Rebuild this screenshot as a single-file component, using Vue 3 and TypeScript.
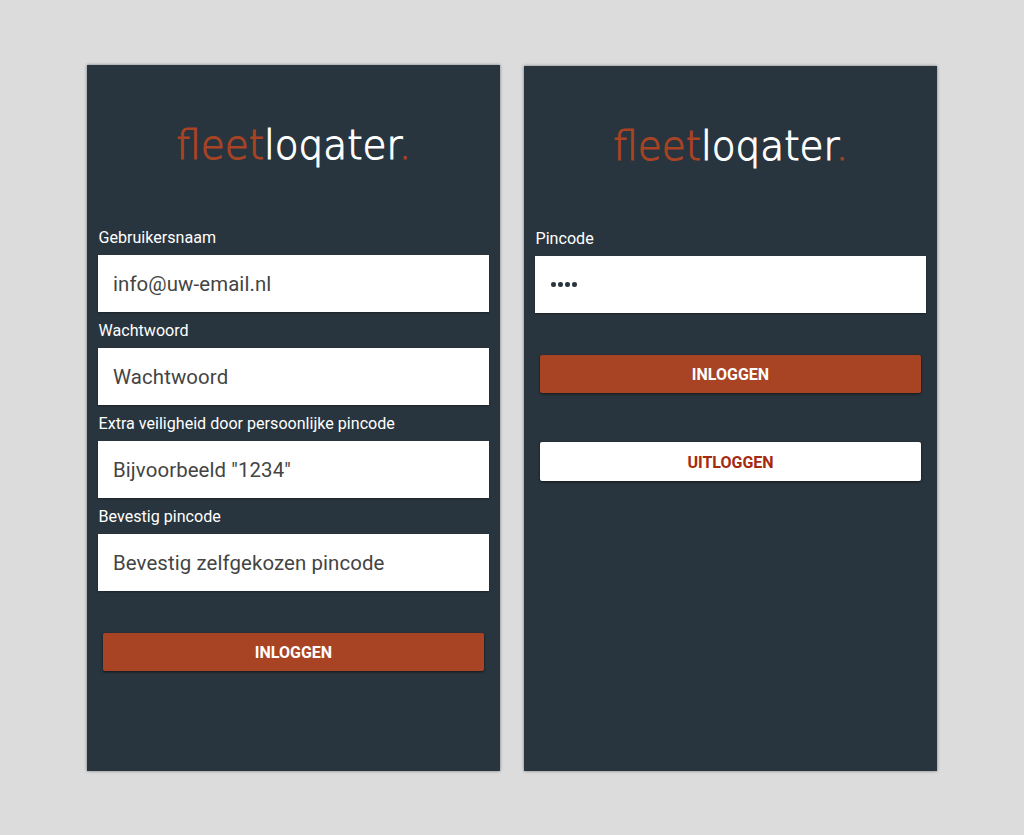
<script setup lang="ts">
const fields = [
  { label: 'Gebruikersnaam', value: 'info@uw-email.nl' },
  { label: 'Wachtwoord', value: 'Wachtwoord' },
  { label: 'Extra veiligheid door persoonlijke pincode', value: 'Bijvoorbeeld "1234"' },
  { label: 'Bevestig pincode', value: 'Bevestig zelfgekozen pincode' },
]
</script>

<template>
  <div class="page">
    <section class="panel">
      <div class="logo"><div class="mark"><span class="red">fleet</span><span class="white">loqater</span><span class="red">.</span></div></div>
      <div class="fields">
        <div v-for="f in fields" :key="f.label" class="field">
          <div class="label">{{ f.label }}</div>
          <div class="input">{{ f.value }}</div>
        </div>
      </div>
      <div class="btn primary">INLOGGEN</div>
    </section>
    <section class="panel second">
      <div class="logo"><div class="mark"><span class="red">fleet</span><span class="white">loqater</span><span class="red">.</span></div></div>
      <div class="fields">
        <div class="field">
          <div class="label">Pincode</div>
          <div class="input dots"><i></i><i></i><i></i><i></i></div>
        </div>
      </div>
      <div class="btn primary">INLOGGEN</div>
      <div class="btn light">UITLOGGEN</div>
    </section>
  </div>
</template>

<style>
html, body { margin: 0; background: #dcdcdc; }
</style>

<style scoped>
.page {
  display: flex;
  align-items: flex-start;
  gap: 24px;
  box-sizing: border-box;
  width: 1024px;
  height: 835px;
  padding: 65px 0 0 87px;
  background: #dcdcdc;
  font-family: Roboto, "Liberation Sans", sans-serif;
}
.panel {
  box-sizing: border-box;
  width: 413px;
  height: 706px;
  padding: 0 11px;
  background: #29353e;
  box-shadow: 0 0 3px rgba(0, 0, 0, 0.45);
}
.second { margin-top: 1px; height: 705px; }
.logo {
  display: flex;
  justify-content: center;
  height: 154px;
  padding-top: 57px;
  box-sizing: border-box;
}
.mark {
  font-family: "DejaVu Sans", sans-serif;
  font-size: 41px;
  font-weight: 200;
  line-height: 46px;
  -webkit-text-stroke: 1.1px currentColor;
  white-space: nowrap;
  transform: scaleX(0.95);
}
.red { color: #a84324; }
.white { color: #ffffff; }
.fields { display: flex; flex-direction: column; }
.field { height: 93px; }
.label {
  box-sizing: border-box;
  height: 36px;
  padding: 1px 0 0 0.5px;
  line-height: 36px;
  font-size: 16.1px;
  color: #ffffff;
  white-space: nowrap;
}
.input {
  box-sizing: border-box;
  display: flex;
  align-items: center;
  width: 391px;
  height: 57px;
  padding-left: 15px;
  background: #ffffff;
  color: #444444;
  font-size: 20.4px;
  letter-spacing: 0.1px;
  box-shadow: 0 1px 2px rgba(0, 0, 0, 0.35);
}
.dots { gap: 2.5px; padding-left: 16px; }
.dots i {
  width: 4.5px;
  height: 4.5px;
  border-radius: 50%;
  background: #29353e;
}
.btn {
  box-sizing: border-box;
  display: flex;
  align-items: center;
  justify-content: center;
  width: 381px;
  height: 38px;
  margin-left: 5px;
  padding-top: 1px;
  border-radius: 2px;
  font-size: 16px;
  font-weight: 700;
  box-shadow: 0 1px 3px rgba(0, 0, 0, 0.6);
}
.primary { margin-top: 42px; background: #a84324; color: #ffffff; }
.light { margin-top: 49px; height: 39px; background: #ffffff; color: #a52a10; }
</style>
